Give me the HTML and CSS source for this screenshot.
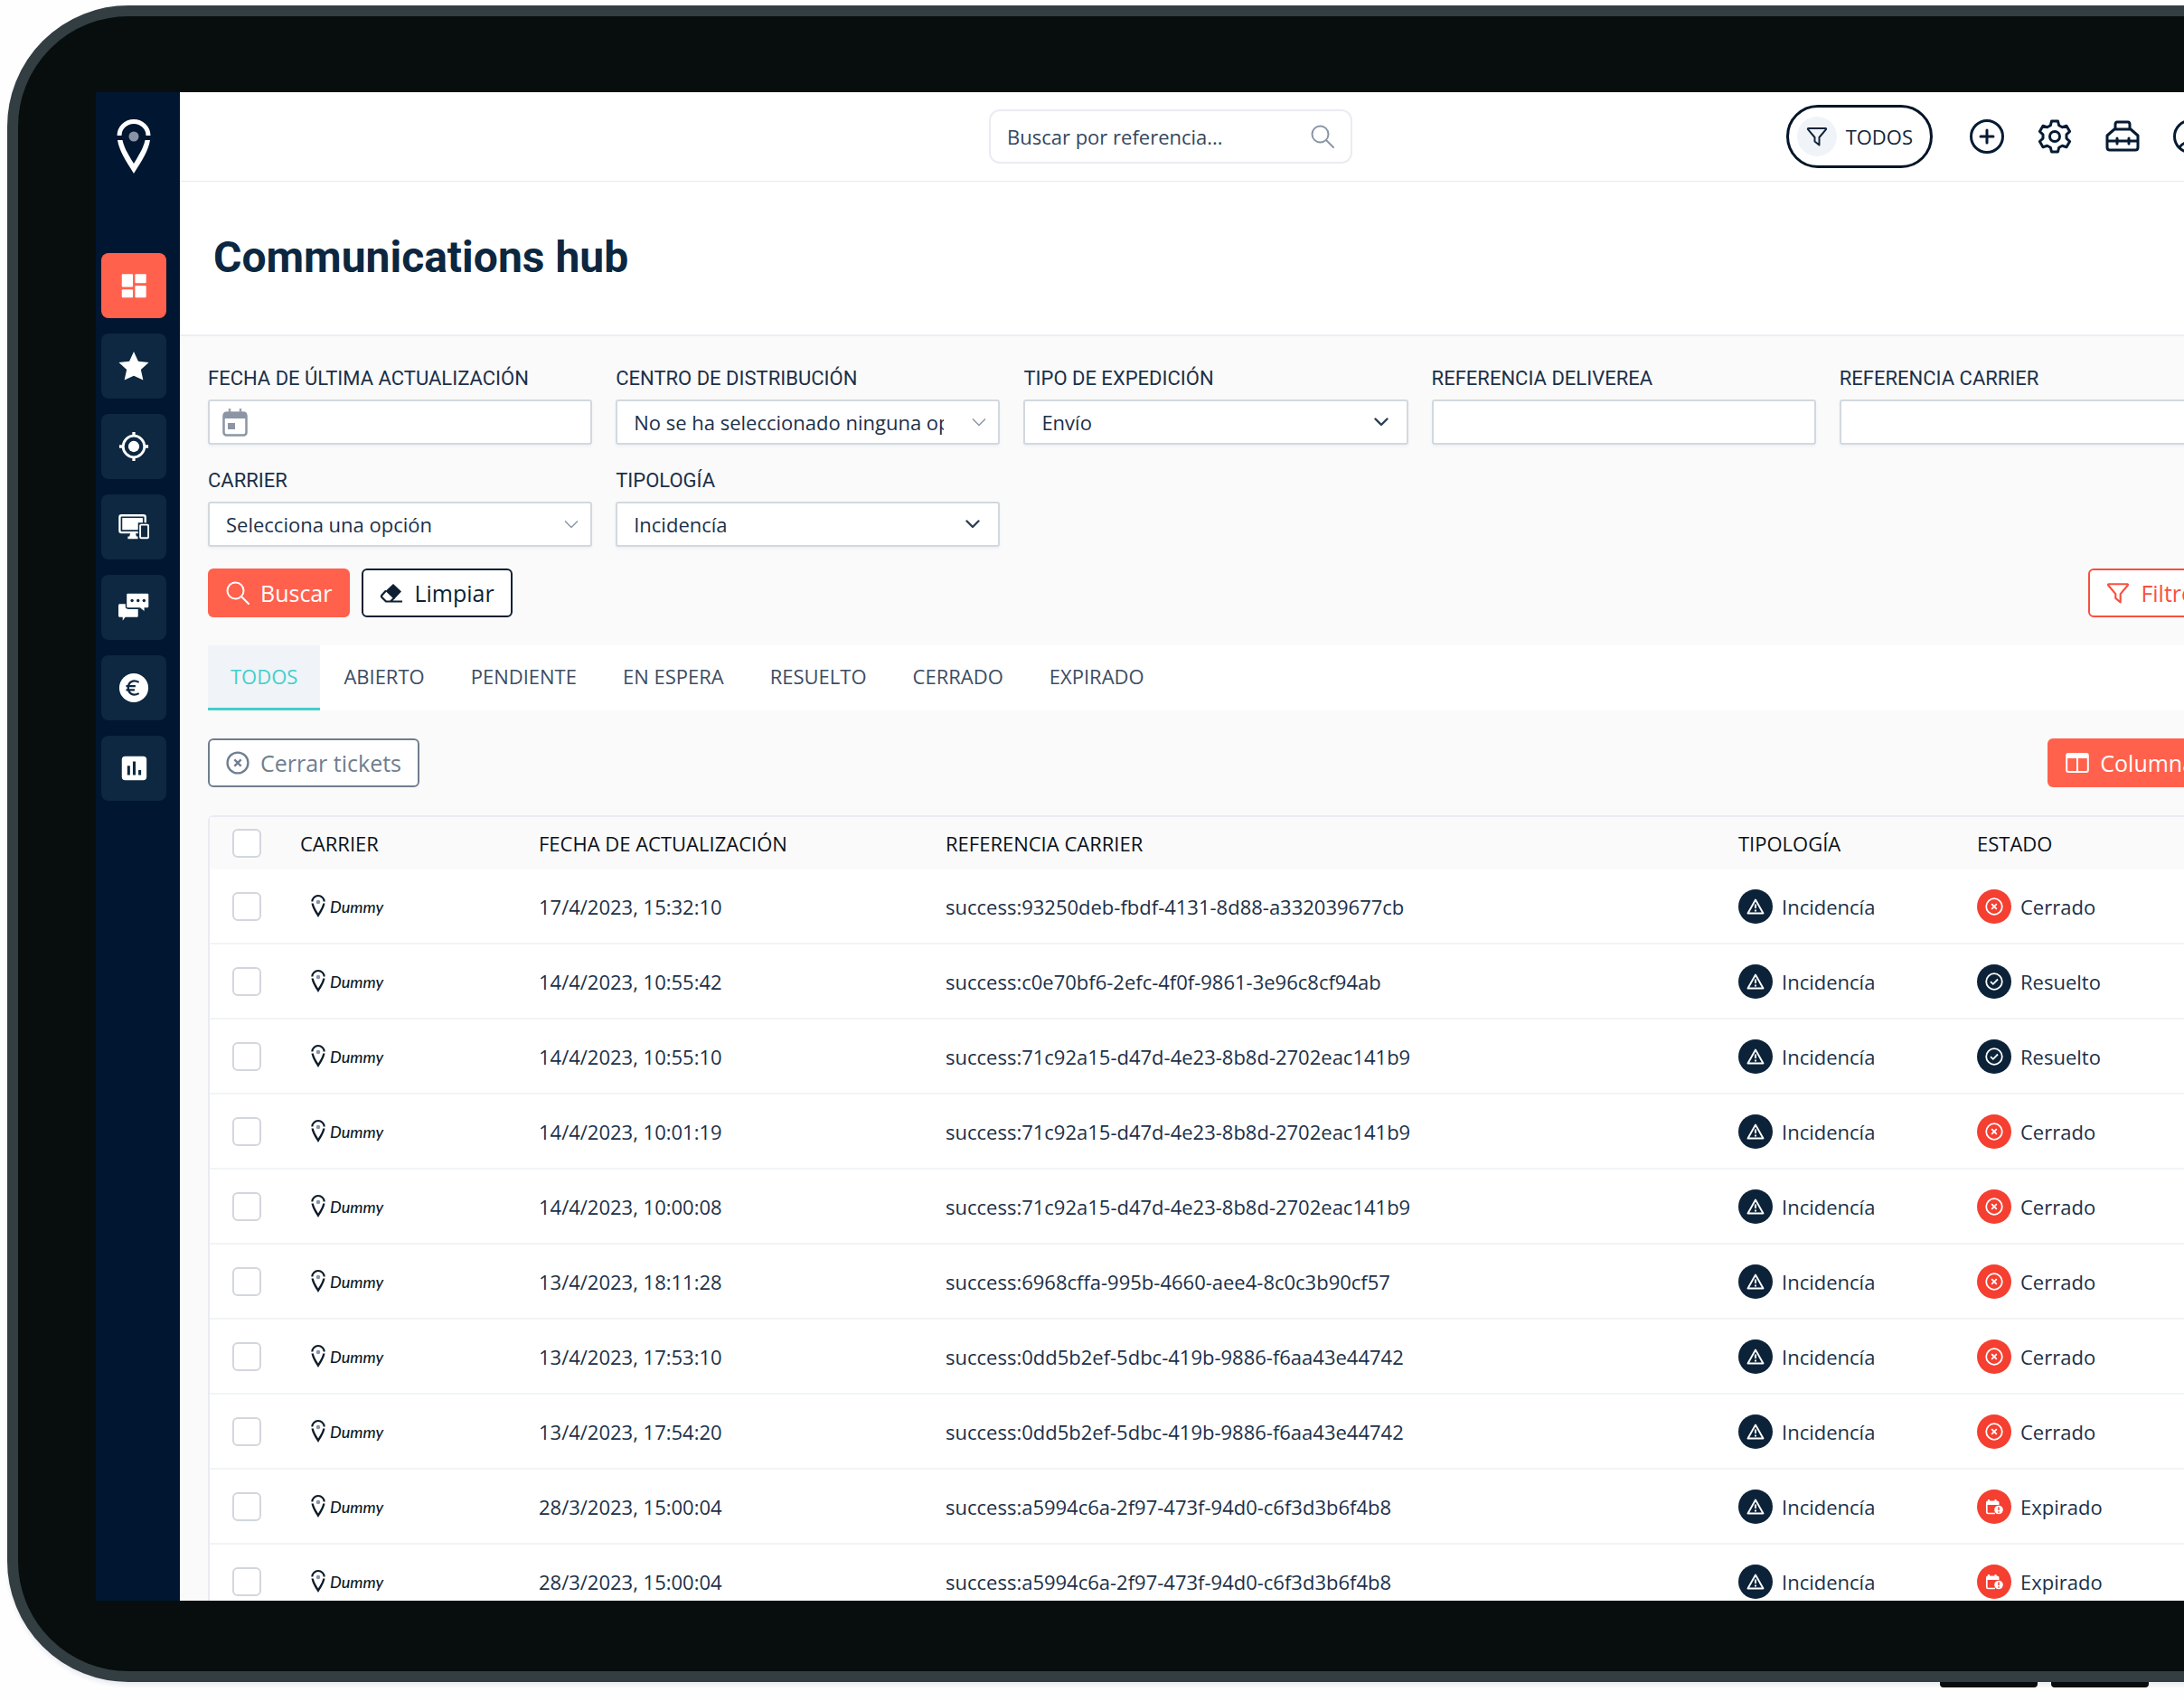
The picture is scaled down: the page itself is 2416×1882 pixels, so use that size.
FILE: index.html
```html
<!DOCTYPE html>
<html lang="es">
<head>
    <meta charset="UTF-8">
    <meta name="viewport" content="width=device-width, initial-scale=1.0">
    <title>Communications hub</title>
    <link rel="stylesheet" href="styles.css">
</head>
<body>
    <!-- shared icons -->
    <svg class="sprite" aria-hidden="true">
        <symbol id="pin" viewBox="0 0 38 60">
            <path d="M3 18a16 15.500 0 0 1 32 0" fill="none" stroke="currentColor" stroke-width="5"/>
            <circle cx="19" cy="19" r="5.500" fill="#8a93a5"/>
            <path d="M1 23h5.500c1.500 7 5 14 12.500 26C26.500 37 30 30 31.500 23H37c-2 12-8 21-18 37C9 44 3 35 1 23z" fill="currentColor"/>
        </symbol>
        <symbol id="search" viewBox="0 0 26 26">
            <g fill="none" stroke="currentColor" stroke-width="2" stroke-linecap="round"><circle cx="10.500" cy="10.500" r="9"/><path d="M17 17l8 8"/></g>
        </symbol>
        <symbol id="funnel" viewBox="0 0 24 24">
            <path d="M2.500 3h19c.6 0 .9.600.5 1.100L14.500 13v8.500L9.500 17.500V13L2 4.100C1.600 3.600 1.900 3 2.500 3z" fill="none" stroke="currentColor" stroke-width="2" stroke-linejoin="round"/>
        </symbol>
        <symbol id="thin-down" viewBox="0 0 16 10"><path d="M1 1.500l7 7 7-7" fill="none" stroke="#8d97a5" stroke-width="1.500"/></symbol>
        <symbol id="down" viewBox="0 0 16 10"><path d="M1.500 1.500L8 8l6.500-6.500" fill="none" stroke="#2b3f55" stroke-width="2.400" stroke-linecap="round" stroke-linejoin="round"/></symbol>
        <symbol id="warn" viewBox="0 0 20 18">
            <path d="M10 1.500L18.500 16.500H1.500z" fill="none" stroke="currentColor" stroke-width="1.900" stroke-linejoin="round"/>
            <path d="M10 6.500v4.500M10 12.600v2" stroke="currentColor" stroke-width="2"/>
        </symbol>
        <symbol id="cross" viewBox="0 0 20 20">
            <g fill="none" stroke="currentColor" stroke-width="1.800"><circle cx="10" cy="10" r="8.800"/><path d="M7.200 7.200l5.600 5.600M12.800 7.200l-5.600 5.600"/></g>
        </symbol>
        <symbol id="check" viewBox="0 0 20 20">
            <g fill="none" stroke="currentColor" stroke-width="1.800"><circle cx="10" cy="10" r="8.800"/><path d="M6 10.200l2.800 2.600L14 7.500"/></g>
        </symbol>
        <symbol id="expired" viewBox="0 0 20 18">
            <path d="M1 7V4.500C1 3 2 2.500 3 2.500V1h2v1.500h5.500V1h2v1.500c1.500 0 3 .5 3 2V7z" fill="currentColor"/>
            <path d="M1.800 6v9c0 1 .5 1.500 1.500 1.500H11" fill="none" stroke="currentColor" stroke-width="1.700"/>
            <circle cx="15" cy="12.500" r="4.800" fill="currentColor"/>
            <path d="M15 9.500v3.500M15 14.200v1.500" stroke="#f43f31" stroke-width="1.500"/>
        </symbol>
    </svg>

    <div class="device">
        <nav class="sidebar">
            <a class="logo" href="#" aria-label="Inicio"><svg><use href="#pin"/></svg></a>
            <a class="nav-item active" href="#" aria-label="Panel">
                <svg viewBox="0 0 36 36" fill="#fff"><rect x="4" y="4.500" width="13" height="15" rx="1"/><rect x="19.500" y="4.500" width="13" height="10.500" rx="1"/><rect x="4" y="22.500" width="13" height="9.500" rx="1"/><rect x="19.500" y="18" width="13" height="14" rx="1"/></svg>
            </a>
            <a class="nav-item" href="#" aria-label="Favoritos">
                <svg viewBox="0 0 36 36" fill="#fff"><path d="M18 1l5.200 11.400L35.500 13.800l-9.200 8.400L29 34.500 18 29.500 7 34.500l2.700-12.300L.500 13.800l12.300-1.400z"/></svg>
            </a>
            <a class="nav-item" href="#" aria-label="Seguimiento">
                <svg viewBox="0 0 36 36" fill="none" stroke="#fff" stroke-width="3"><circle cx="18" cy="18" r="12.500"/><circle cx="18" cy="18" r="6.500" fill="#fff" stroke="none"/><path d="M18 1v5M18 30v5M1 18h5M30 18h5" stroke-width="3.500"/></svg>
            </a>
            <a class="nav-item" href="#" aria-label="Dispositivos">
                <svg viewBox="0 0 36 36"><rect x="1.500" y="4.500" width="30" height="20" rx="2" fill="none" stroke="#fff" stroke-width="2.500"/><rect x="4.500" y="7.500" width="24" height="14" fill="#fff"/><path d="M14 25h6l1 4h2v3H11v-3h2z" fill="#fff"/><rect x="23" y="13" width="13" height="20" fill="#0d2840"/><rect x="25.500" y="15.500" width="9.500" height="15.500" rx="1" fill="none" stroke="#fff" stroke-width="2"/></svg>
            </a>
            <a class="nav-item" href="#" aria-label="Mensajes">
                <svg viewBox="0 0 36 36"><path d="M2 14h9v6h12v8c0 1-.5 1.500-1.500 1.500H8l-3 4v-4H2c-1 0-2-.5-2-1.500V16c0-1.500.5-2 2-2z" fill="#fff"/><path d="M11 1h23c1.500 0 2 .5 2 2v14c0 1.500-.5 2-2 2h-3v5l-6-5H11c-1.500 0-2-.5-2-2V3c0-1.500.5-2 2-2z" fill="#fff" stroke="#0d2840" stroke-width="1.500"/><g fill="#0d2840"><circle cx="16" cy="10" r="1.800"/><circle cx="23" cy="10" r="1.800"/><circle cx="30" cy="10" r="1.800"/></g></svg>
            </a>
            <a class="nav-item" href="#" aria-label="Facturas">
                <svg viewBox="0 0 36 36"><circle cx="18" cy="18" r="17" fill="#fff"/><path d="M24 11.500c-7-4-12.500 0-12.500 6.500S17 28.500 24 24.500M9 16h11M9 20.500h10" fill="none" stroke="#0d2840" stroke-width="2.400"/></svg>
            </a>
            <a class="nav-item" href="#" aria-label="Informes">
                <svg viewBox="0 0 36 36"><rect x="4" y="4" width="29" height="28" rx="4" fill="#fff"/><path d="M12 15v11M18.500 10v16M25 20v6" stroke="#0d2840" stroke-width="3.200"/></svg>
            </a>
        </nav>

        <div class="content">
            <header class="topbar">
                <label class="searchbox">
                    <input type="text" placeholder="Buscar por referencia..." aria-label="Buscar por referencia">
                    <svg><use href="#search"/></svg>
                </label>
                <div class="tools">
                    <button class="pill"><span class="pill-icon"><svg><use href="#funnel"/></svg></span>TODOS</button>
                    <button class="tool" aria-label="Crear"><svg viewBox="0 0 38 38"><circle cx="19" cy="19" r="17.500"/><path d="M19 12v14M12 19h14"/></svg></button>
                    <button class="tool" aria-label="Ajustes"><svg viewBox="0 0 38 38"><circle cx="19" cy="19" r="5.500"/><path d="M15.500 2h7l1.200 4.800 3.600 2 4.700-1.500 3.600 6.200-3.600 3.400v4.200l3.600 3.400-3.600 6.200-4.700-1.500-3.600 2L22.500 36h-7l-1.200-4.800-3.600-2L6 30.700l-3.600-6.200L6 21.100v-4.200l-3.600-3.400L6 7.300l4.700 1.500 3.600-2z"/></svg></button>
                    <button class="tool" aria-label="Herramientas"><svg viewBox="0 0 38 38"><path d="M2 18l8-7h18l8 7v13c0 2-1 3-3 3H5c-2 0-3-1-3-3zM2 24h34M13 21v6M26 21v6M11 11V6c0-2 1-3 2-3h12c1 0 2 1 2 3v5"/></svg></button>
                    <button class="tool" aria-label="Usuario"><svg viewBox="0 0 38 38"><circle cx="19" cy="19" r="17.500"/><circle cx="20" cy="15" r="6"/><path d="M7 31c3-4 7-6 12-6s9 2 12 6"/></svg></button>
                </div>
            </header>

            <div class="title">
                <h1>Communications hub</h1>
            </div>

            <main class="page">
                <form class="filters">
                    <div class="field">
                        <label for="fecha">FECHA DE ÚLTIMA ACTUALIZACIÓN</label>
                        <div class="control">
                            <input id="fecha" type="text">
                            <svg class="calendar" viewBox="0 0 28 32"><path d="M8 1v5M20 1v5" stroke="#9aa4b2" stroke-width="2.500"/><rect x="1.500" y="6" width="25" height="24.500" rx="3" fill="none" stroke="#8b95a4" stroke-width="2.500"/><path d="M1 12V8c0-2 1-3.500 3-3.500h20c2 0 3 1.500 3 3.500v4z" fill="#8b95a4"/><rect x="6" y="17" width="8" height="7" fill="#8b95a4"/></svg>
                        </div>
                    </div>
                    <div class="field">
                        <label for="centro">CENTRO DE DISTRIBUCIÓN</label>
                        <div class="control">
                            <select id="centro"><option>No se ha seleccionado ninguna opción</option></select>
                            <svg class="arrow thin"><use href="#thin-down"/></svg>
                        </div>
                    </div>
                    <div class="field">
                        <label for="expedicion">TIPO DE EXPEDICIÓN</label>
                        <div class="control">
                            <select id="expedicion"><option>Envío</option></select>
                            <svg class="arrow"><use href="#down"/></svg>
                        </div>
                    </div>
                    <div class="field">
                        <label for="refdeliverea">REFERENCIA DELIVEREA</label>
                        <div class="control"><input id="refdeliverea" type="text"></div>
                    </div>
                    <div class="field">
                        <label for="refcarrier">REFERENCIA CARRIER</label>
                        <div class="control"><input id="refcarrier" type="text"></div>
                    </div>
                    <div class="field">
                        <label for="carrier">CARRIER</label>
                        <div class="control">
                            <select id="carrier"><option>Selecciona una opción</option></select>
                            <svg class="arrow thin"><use href="#thin-down"/></svg>
                        </div>
                    </div>
                    <div class="field">
                        <label for="tipologia">TIPOLOGÍA</label>
                        <div class="control">
                            <select id="tipologia"><option>Incidencía</option></select>
                            <svg class="arrow"><use href="#down"/></svg>
                        </div>
                    </div>
                </form>

                <div class="actions search-actions">
                    <button class="btn primary"><svg><use href="#search"/></svg>Buscar</button>
                    <button class="btn dark">
                        <svg viewBox="0 0 26 26"><path d="M15 3l9 8.500-8 8.500-9.500-9z" fill="currentColor"/><path d="M7 10.500L2.500 15.500c-.8 1-.8 1.700 0 2.500L7 22.500h5l4-4M10 22.500h15" fill="none" stroke="currentColor" stroke-width="2.200"/></svg>Limpiar
                    </button>
                    <button class="btn outline right"><svg><use href="#funnel"/></svg>Filtros</button>
                </div>

                <nav class="tabs">
                    <a class="tab selected" href="#">TODOS</a>
                    <a class="tab" href="#">ABIERTO</a>
                    <a class="tab" href="#">PENDIENTE</a>
                    <a class="tab" href="#">EN ESPERA</a>
                    <a class="tab" href="#">RESUELTO</a>
                    <a class="tab" href="#">CERRADO</a>
                    <a class="tab" href="#">EXPIRADO</a>
                </nav>

                <div class="actions">
                    <button class="btn muted"><svg><use href="#cross"/></svg>Cerrar tickets</button>
                    <button class="btn primary right">
                        <svg viewBox="0 0 26 26"><rect x="1.200" y="3" width="23.600" height="20" rx="2" fill="none" stroke="currentColor" stroke-width="2"/><path d="M1 3h24v5H1zM12 8h2v15h-2z" fill="currentColor"/></svg>Columnas
                    </button>
                </div>

                <div class="tickets">
                    <table>
                        <colgroup><col class="col-check"><col class="col-carrier"><col class="col-date"><col><col class="col-type"><col class="col-state"></colgroup>
                        <thead>
                            <tr><th><input type="checkbox" aria-label="Todos"></th><th>CARRIER</th><th>FECHA DE ACTUALIZACIÓN</th><th>REFERENCIA CARRIER</th><th>TIPOLOGÍA</th><th>ESTADO</th></tr>
                        </thead>
                        <tbody id="rows"></tbody>
                    </table>
                </div>
            </main>
        </div>
    </div>
    <div class="feet"><span></span><span></span></div>

    <script src="script.js"></script>
</body>
</html>
```

FILE: styles.css
```css
* {
    box-sizing: border-box;
}

body {
    margin: 0;
    height: 100vh;
    overflow: hidden;
    background: #fefefe;
    color: #1b3049;
    font-family: "Open Sans", "Noto Sans", sans-serif;
    font-size: 22px;
}

input, select, button {
    font: inherit;
    color: inherit;
}

a {
    color: inherit;
    text-decoration: none;
}

.sprite {
    position: absolute;
    width: 0;
    height: 0;
}

/* tablet frame, runs off the right side of the window */
.device {
    display: flex;
    height: calc(100vh - 27px);
    margin: 6px -173px 0 8px;
    padding: 84px 86px 78px;
    border: 12px solid #323e42;
    border-radius: 134px;
    background: #080e0e;
    box-shadow: 0 4px 4px #eceef2;
}

.feet {
    display: flex;
    gap: 15px;
    padding-left: 2146px;
}

.feet span {
    flex: 0 0 108px;
    height: 6px;
    border-radius: 0 0 4px 4px;
    background: #080e0e;
}

/* sidebar */
.sidebar {
    flex: 0 0 93px;
    display: flex;
    flex-direction: column;
    gap: 17px;
    padding-left: 6px;
    background: #001631;
}

.logo {
    width: 72px;
    height: 161px;
    padding: 30px 17px 0;
    color: #fff;
}

.logo svg {
    width: 38px;
    height: 60px;
}

.nav-item {
    display: flex;
    align-items: center;
    justify-content: center;
    width: 72px;
    height: 72px;
    border-radius: 8px;
    background: #0d2840;
}

.nav-item.active {
    background: #ff614d;
}

.nav-item svg {
    width: 34px;
    height: 34px;
}

/* top bar */
.content {
    flex: 1;
    min-width: 0;
    overflow: hidden;
    background: #fafafa;
}

.topbar {
    display: flex;
    align-items: center;
    justify-content: space-between;
    height: 99px;
    padding: 0 49px 0 895px;
    border-bottom: 1px solid #e8eaee;
    background: #fff;
}

.searchbox {
    display: flex;
    align-items: center;
    width: 402px;
    height: 60px;
    padding: 0 18px;
    border: 2px solid #ebecf2;
    border-radius: 12px;
}

.searchbox input {
    flex: 1;
    min-width: 0;
    padding: 0;
    border: 0;
    outline: 0;
}

.searchbox input::placeholder {
    color: #34475d;
}

.searchbox svg {
    width: 26px;
    height: 26px;
    color: #8a95a5;
}

.tools {
    display: flex;
    align-items: center;
    gap: 37px;
}

.pill {
    display: flex;
    align-items: center;
    gap: 10px;
    height: 70px;
    margin-right: 4px;
    padding: 0 19px 0 9px;
    border: 3px solid #041527;
    border-radius: 35px;
    background: #fff;
    color: #10253c;
}

.pill-icon {
    display: flex;
    align-items: center;
    justify-content: center;
    width: 44px;
    height: 44px;
    border-radius: 50%;
    background: #f0f4f8;
}

.pill-icon svg {
    width: 24px;
    height: 24px;
}

.tool {
    width: 38px;
    height: 38px;
    padding: 0;
    border: 0;
    background: none;
}

.tool svg {
    display: block;
    width: 38px;
    height: 38px;
    fill: none;
    stroke: #041b33;
    stroke-width: 3;
    stroke-linecap: round;
    stroke-linejoin: round;
}

.title {
    display: flex;
    align-items: center;
    height: 171px;
    padding: 0 37px 2px;
    border-bottom: 2px solid #ebeff3;
    background: #fff;
}

h1 {
    margin: 0;
    color: #0c2740;
    font-family: Roboto, sans-serif;
    font-size: 48px;
    font-weight: 700;
}

/* filters */
.page {
    padding: 31px;
}

.filters {
    display: grid;
    grid-template-columns: repeat(5, 1fr);
    gap: 24px 26px;
}

.field label {
    display: block;
    margin-bottom: 7px;
    font-family: Roboto, sans-serif;
    line-height: 32px;
}

.control {
    position: relative;
}

.control input, .control select {
    display: block;
    width: 100%;
    height: 50px;
    padding: 0 18px;
    border: 2px solid #d3d8df;
    border-radius: 3px;
    outline: 0;
    background: #fff;
    box-shadow: 0 2px 3px #edf0f4;
    appearance: none;
}

.control select {
    padding-right: 60px;
}

.calendar {
    position: absolute;
    left: 16px;
    top: 9px;
    width: 28px;
    height: 32px;
}

.arrow {
    position: absolute;
    right: 22px;
    top: 20px;
    width: 16px;
    height: 10px;
}

.arrow.thin {
    right: 15px;
}

/* buttons */
.actions {
    display: flex;
    gap: 13px;
}

.search-actions {
    margin-top: 24px;
}

.btn {
    display: flex;
    align-items: center;
    gap: 12px;
    height: 54px;
    padding: 0 18px;
    border: 2px solid;
    border-radius: 6px;
    background: #fff;
    font-size: 25px;
}

.btn svg {
    width: 26px;
    height: 26px;
}

.btn.primary {
    border-color: #ff614d;
    background: #ff614d;
    color: #fff;
}

.btn.dark {
    color: #0c1f33;
}

.btn.outline {
    color: #f8503f;
}

.btn.muted {
    color: #6f7e90;
}

.btn.right {
    margin-left: auto;
}

/* tabs */
.tabs {
    display: flex;
    gap: 1px;
    margin: 31px 0;
    background: #fff;
}

.tab {
    padding: 0 25px;
    border-bottom: 3px solid #fff;
    color: #3c4d63;
    line-height: 69px;
}

.tab.selected {
    border-color: #42cfca;
    background: #f0f4f8;
    color: #42cfca;
}

/* tickets table */
.tickets {
    margin-top: 31px;
    border: 2px solid #eaebf2;
    border-radius: 6px;
    background: #fff;
}

table {
    width: 100%;
    table-layout: fixed;
    border-spacing: 0;
}

.col-check { width: 100px; }
.col-carrier { width: 264px; }
.col-date { width: 450px; }
.col-type { width: 264px; }
.col-state { width: 271px; }

th, td {
    padding: 0;
    text-align: left;
    white-space: nowrap;
}

th {
    height: 58px;
    background: #fafafa;
    color: #0a1018;
    font-weight: 400;
}

td {
    height: 83px;
    border-bottom: 2px solid #f1f4f7;
}

th:first-child, td:first-child {
    padding-left: 25px;
}

input[type="checkbox"] {
    display: block;
    width: 32px;
    height: 32px;
    margin: 0;
    border: 2px solid #d3d6dd;
    border-radius: 6px;
    background: #fff;
    appearance: none;
}

.dummy {
    display: flex;
    align-items: center;
    gap: 5px;
    padding-left: 12px;
    color: #0c1a28;
    font-family: Lato, sans-serif;
    font-size: 18px;
    font-style: italic;
    font-weight: 500;
}

.dummy svg {
    width: 16px;
    height: 25px;
}

.badge {
    display: flex;
    align-items: center;
    gap: 10px;
}

.badge-icon {
    display: flex;
    align-items: center;
    justify-content: center;
    width: 38px;
    height: 38px;
    border-radius: 50%;
    background: #0c2238;
    color: #fff;
}

.badge-icon.red {
    background: #f43f31;
}

.badge-icon svg {
    width: 20px;
    height: 20px;
}
```

FILE: script.js
```js
const tickets = [
    ["17/4/2023, 15:32:10", "success:93250deb-fbdf-4131-8d88-a332039677cb", "Cerrado"],
    ["14/4/2023, 10:55:42", "success:c0e70bf6-2efc-4f0f-9861-3e96c8cf94ab", "Resuelto"],
    ["14/4/2023, 10:55:10", "success:71c92a15-d47d-4e23-8b8d-2702eac141b9", "Resuelto"],
    ["14/4/2023, 10:01:19", "success:71c92a15-d47d-4e23-8b8d-2702eac141b9", "Cerrado"],
    ["14/4/2023, 10:00:08", "success:71c92a15-d47d-4e23-8b8d-2702eac141b9", "Cerrado"],
    ["13/4/2023, 18:11:28", "success:6968cffa-995b-4660-aee4-8c0c3b90cf57", "Cerrado"],
    ["13/4/2023, 17:53:10", "success:0dd5b2ef-5dbc-419b-9886-f6aa43e44742", "Cerrado"],
    ["13/4/2023, 17:54:20", "success:0dd5b2ef-5dbc-419b-9886-f6aa43e44742", "Cerrado"],
    ["28/3/2023, 15:00:04", "success:a5994c6a-2f97-473f-94d0-c6f3d3b6f4b8", "Expirado"],
    ["28/3/2023, 15:00:04", "success:a5994c6a-2f97-473f-94d0-c6f3d3b6f4b8", "Expirado"]
];

// icon and circle colour of each state
const states = {
    Cerrado: ["cross", "red"],
    Resuelto: ["check", ""],
    Expirado: ["expired", "red"]
};

function badge(text, icon, color) {
    return `<div class="badge"><span class="badge-icon ${color}"><svg><use href="#${icon}"/></svg></span>${text}</div>`;
}

document.getElementById("rows").innerHTML = tickets.map(([date, ref, state]) => `
    <tr>
        <td><input type="checkbox" aria-label="${ref}"></td>
        <td><div class="dummy"><svg><use href="#pin"/></svg>Dummy</div></td>
        <td>${date}</td>
        <td>${ref}</td>
        <td>${badge("Incidencía", "warn", "")}</td>
        <td>${badge(state, ...states[state])}</td>
    </tr>`).join("");
```
